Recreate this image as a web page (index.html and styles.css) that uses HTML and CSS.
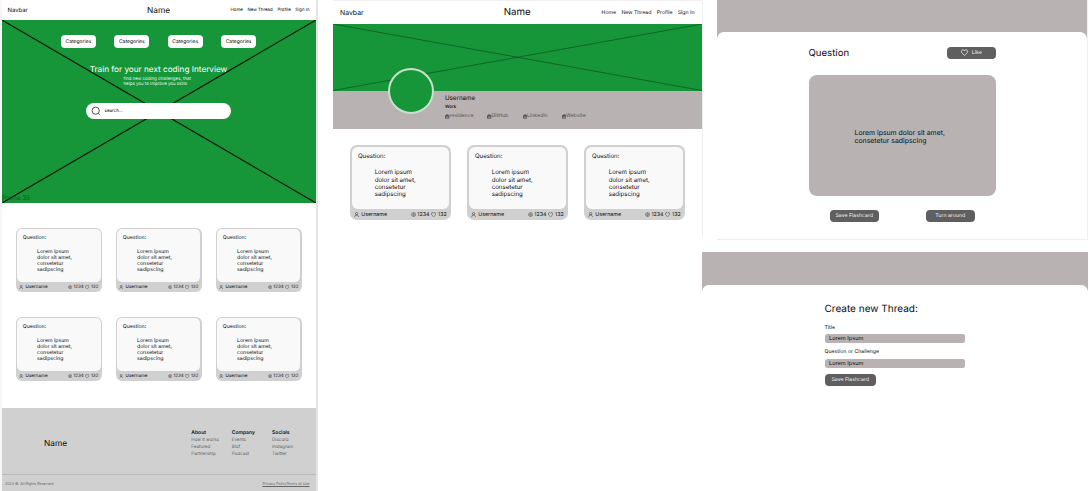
FILE: index.html
```html
<!DOCTYPE html>
<html lang="en">
<head>
<meta charset="utf-8">
<title>Wireframes</title>
<link rel="stylesheet" href="styles.css">
</head>
<body>
<svg class="defs" aria-hidden="true">
  <symbol id="user" viewBox="0 0 16 16"><circle cx="8" cy="5" r="3.6"/><path d="M2 15.5c0-4 2.5-6 6-6s6 2 6 6"/></symbol>
  <symbol id="eye" viewBox="0 0 16 16"><path d="M.8 8C3 3.4 5.5 2 8 2s5 1.400 7.200 6c-2.200 4.600-4.700 6-7.200 6S3 12.600.8 8z"/><circle cx="8" cy="8" r="2.600"/></symbol>
  <symbol id="heart" viewBox="0 0 16 16"><path d="M8 14.500C4 11.500 1 9 1 5.500 1 3.300 2.600 1.800 4.500 1.800c1.500 0 2.800.8 3.500 2.200.7-1.400 2-2.200 3.500-2.200 1.900 0 3.500 1.500 3.500 3.700 0 3.500-3 6-7 9z"/></symbol>
  <symbol id="case" viewBox="0 0 16 16"><path d="M5 5V2h6v3M1 5h14v9H1zM1 9h14"/></symbol>
</svg>
<main class="board">
  <section class="screen home">
    <nav class="nav"><span>Navbar</span><strong class="brand">Name</strong><div class="links"><a>Home</a><a>New Thread</a><a>Profile</a><a>Sign In</a></div></nav>
    <header class="hero">
      <svg class="cross" viewBox="0 0 314 183" preserveAspectRatio="none"><path d="M0 0L314 183M0 183L314 0"/></svg>
      <div class="cats"><span>Categories</span><span>Categories</span><span>Categories</span><span>Categories</span></div>
      <h1>Train for your next coding Interview</h1>
      <p class="lead">find new coding challenges, that<br>helps you to improve you skills</p>
      <div class="search"><svg viewBox="0 0 10 10"><circle cx="4.700" cy="4.700" r="3.600"/><path d="M7.300 7.300L8.600 8.600"/></svg><span>search...</span></div>
      <span class="frame">Frame 35</span>
    </header>
    <div class="cards">
      <article class="card"><div class="face"><h3>Question:</h3><p>Lorem ipsum<br>dolor sit amet,<br>consetetur<br>sadipscing</p></div><footer><svg><use href="#user"/></svg><b>Username</b><svg class="eye"><use href="#eye"/></svg><i>1234</i><svg><use href="#heart"/></svg><i class="likes">132</i></footer></article>
      <article class="card"><div class="face"><h3>Question:</h3><p>Lorem ipsum<br>dolor sit amet,<br>consetetur<br>sadipscing</p></div><footer><svg><use href="#user"/></svg><b>Username</b><svg class="eye"><use href="#eye"/></svg><i>1234</i><svg><use href="#heart"/></svg><i class="likes">132</i></footer></article>
      <article class="card"><div class="face"><h3>Question:</h3><p>Lorem ipsum<br>dolor sit amet,<br>consetetur<br>sadipscing</p></div><footer><svg><use href="#user"/></svg><b>Username</b><svg class="eye"><use href="#eye"/></svg><i>1234</i><svg><use href="#heart"/></svg><i class="likes">132</i></footer></article>
      <article class="card"><div class="face"><h3>Question:</h3><p>Lorem ipsum<br>dolor sit amet,<br>consetetur<br>sadipscing</p></div><footer><svg><use href="#user"/></svg><b>Username</b><svg class="eye"><use href="#eye"/></svg><i>1234</i><svg><use href="#heart"/></svg><i class="likes">132</i></footer></article>
      <article class="card"><div class="face"><h3>Question:</h3><p>Lorem ipsum<br>dolor sit amet,<br>consetetur<br>sadipscing</p></div><footer><svg><use href="#user"/></svg><b>Username</b><svg class="eye"><use href="#eye"/></svg><i>1234</i><svg><use href="#heart"/></svg><i class="likes">132</i></footer></article>
      <article class="card"><div class="face"><h3>Question:</h3><p>Lorem ipsum<br>dolor sit amet,<br>consetetur<br>sadipscing</p></div><footer><svg><use href="#user"/></svg><b>Username</b><svg class="eye"><use href="#eye"/></svg><i>1234</i><svg><use href="#heart"/></svg><i class="likes">132</i></footer></article>
    </div>
    <footer class="foot">
      <div class="foot-top">
        <strong class="brand">Name</strong>
        <div class="cols">
          <div><h4>About</h4><a>How it works</a><a>Featured</a><a>Partnership</a></div>
          <div><h4>Company</h4><a>Events</a><a>Blof</a><a>Podcast</a></div>
          <div><h4>Socials</h4><a>Discord</a><a>Instagram</a><a>Twitter</a></div>
        </div>
      </div>
      <div class="legal"><span>2023 ©. All Rights Reserved</span><u>Privacy PolicyTerms of Use</u></div>
    </footer>
  </section>

  <section class="screen profile">
    <nav class="nav"><span>Navbar</span><strong class="brand">Name</strong><div class="links"><a>Home</a><a>New Thread</a><a>Profile</a><a>Sign In</a></div></nav>
    <header class="cover"><svg class="cross" viewBox="0 0 369 67" preserveAspectRatio="none"><path d="M0 0L369 67M0 67L369 0"/></svg></header>
    <div class="bio">
      <div class="avatar"></div>
      <h2>Username</h2>
      <p>Work</p>
      <div class="socials"><a><svg><use href="#case"/></svg>residence</a><a><svg><use href="#case"/></svg>GitHub</a><a><svg><use href="#case"/></svg>LinkedIn</a><a><svg><use href="#case"/></svg>Website</a></div>
    </div>
    <div class="cards">
      <article class="card"><div class="face"><h3>Question:</h3><p>Lorem ipsum<br>dolor sit amet,<br>consetetur<br>sadipscing</p></div><footer><svg><use href="#user"/></svg><b>Username</b><svg class="eye"><use href="#eye"/></svg><i>1234</i><svg><use href="#heart"/></svg><i class="likes">132</i></footer></article>
      <article class="card"><div class="face"><h3>Question:</h3><p>Lorem ipsum<br>dolor sit amet,<br>consetetur<br>sadipscing</p></div><footer><svg><use href="#user"/></svg><b>Username</b><svg class="eye"><use href="#eye"/></svg><i>1234</i><svg><use href="#heart"/></svg><i class="likes">132</i></footer></article>
      <article class="card"><div class="face"><h3>Question:</h3><p>Lorem ipsum<br>dolor sit amet,<br>consetetur<br>sadipscing</p></div><footer><svg><use href="#user"/></svg><b>Username</b><svg class="eye"><use href="#eye"/></svg><i>1234</i><svg><use href="#heart"/></svg><i class="likes">132</i></footer></article>
    </div>
  </section>

  <div class="side">
    <section class="question">
      <div class="panel">
        <div class="q-head"><h2>Question</h2><button class="btn"><svg><use href="#heart"/></svg>Like</button></div>
        <div class="flash"><p>Lorem ipsum dolor sit amet,<br>consetetur sadipscing</p></div>
        <div class="actions"><button class="btn">Save Flashcard</button><button class="btn">Turn around</button></div>
      </div>
    </section>
    <section class="create">
      <div class="panel">
        <h2>Create new Thread:</h2>
        <label>Title</label><div class="field">Lorem Ipsum</div>
        <label>Question or Challenge</label><div class="field">Lorem Ipsum</div>
        <button class="btn">Save Flashcard</button>
      </div>
    </section>
  </div>
</main>
</body>
</html>
```
FILE: styles.css
```css
* { box-sizing: border-box; margin: 0; padding: 0; }
body { width: 1089px; height: 491px; overflow: hidden; background: #fff; color: #0c0c0c; font-family: Inter, "Liberation Sans", sans-serif; font-weight: 400; text-rendering: geometricPrecision; }
.defs { display: block; width: 0; height: 0; }
svg { fill: none; stroke: currentColor; }
h1, h2, h3, strong { font-weight: 400; }
.board { display: flex; width: 1089px; height: 491px; overflow: hidden; }

.home { width: 318px; height: 491px; margin-right: 15px; border-left: 2px solid #f7f7f7; border-right: 2px solid #e4e4e4; flex: none; }
.nav { display: grid; grid-template-columns: 1fr auto 1fr; align-items: center; }
.links { display: flex; justify-content: flex-end; }
.home .nav { height: 20px; padding: 1px 6.500px 0 5.500px; font-size: 5.900px; }
.home .brand { font-size: 8.300px; }
.home .links { gap: 4.600px; font-size: 4.400px; }

.hero { position: relative; height: 183px; background: #179639; display: flex; flex-direction: column; align-items: center; padding: 14.500px 1px 0 0; }
.cross { position: absolute; inset: 0; width: 100%; height: 100%; stroke: #051c0b; stroke-width: 1.200; }
.hero > :not(.cross):not(.frame) { position: relative; }
.cats { display: flex; gap: 18.600px; height: 13.500px; }
.cats span { width: 34.800px; background: #fff; border-radius: 4px; font-size: 5px; line-height: 14.500px; text-align: center; }
.hero h1 { margin-top: 15px; height: 12px; line-height: 12px; font-size: 8.200px; color: #fff; white-space: nowrap; }
.lead { width: 70px; margin-top: 2px; font-size: 4.400px; line-height: 5.200px; color: #e2f2e6; white-space: nowrap; }
.search { width: 145px; height: 16px; margin-top: 15.600px; border-radius: 8px; background: #fff; display: flex; align-items: center; padding-left: 5px; gap: 3.500px; font-size: 4.500px; }
.search svg { width: 10px; height: 10px; stroke-width: .7; }
.frame { position: absolute; left: 0; bottom: 1px; font-size: 6.300px; line-height: 7px; color: #0b5a20; }

.cards { display: grid; grid-template-columns: repeat(3, 16.500em); }
.home .cards { font-size: 5.200px; padding: 25px 14px 0; column-gap: 14.200px; row-gap: 25px; height: 205px; align-content: start; }
.card { height: 12.300em; background: #d0d0d0; border-radius: 1.150em; padding: .25em; }
.face { height: 10.200em; background: #f9f9f9; border-radius: .95em; padding: 1.130em 1.050em 0; }
.card h3 { font-size: 1em; line-height: 1.400em; }
.card p { font-size: 1em; line-height: 1.190em; margin: 1.200em 0 0 2.750em; white-space: nowrap; }
.card footer { height: 1.800em; display: flex; align-items: center; padding: .15em .4em 0 .4em; }
.card footer svg { width: .85em; height: .85em; margin-top: -.15em; stroke-width: 1.300; flex: none; }
.card b, .card i { font: inherit; font-size: .87em; }
.card b { margin-left: .4em; }
.card .eye { margin-left: auto; }
.card i { margin: 0 .35em 0 .3em; }
.card .likes { margin-right: 0; }

.foot { height: 83px; background: #d0d0d0; }
.foot-top { height: 67px; display: flex; justify-content: space-between; padding: 20.600px 3.500px 0 42px; border-bottom: 1px solid #bababa; }
.foot .brand { line-height: 30px; }
.cols { display: grid; grid-template-columns: repeat(3, 40.400px); }
.cols h4 { font-size: 5px; line-height: 8px; font-weight: 600; }
.cols a { display: block; font-size: 4.500px; line-height: 7.400px; color: #666; white-space: nowrap; }
.legal { height: 16px; display: flex; justify-content: space-between; align-items: center; padding: 1px 6.500px 0 3px; font-size: 3.650px; color: #666; }

.profile { width: 370px; height: 236px; flex: none; border-top: 1px solid #f1f1f1; border-right: 1px solid #eee; }
.profile .nav { height: 23px; padding: .5px 7.500px 0 7px; font-size: 6.900px; }
.profile .brand { font-size: 9.700px; }
.profile .links { gap: 5.300px; font-size: 5.200px; }
.cover { position: relative; height: 66.500px; background: #179639; }
.cover .cross { stroke: #0b5120; stroke-width: .7; }
.bio { position: relative; height: 38px; background: #b8b2b2; padding: 3.600px 0 0 112px; }
.avatar { position: absolute; left: 54.500px; top: -23px; width: 46px; height: 46px; border-radius: 50%; border: 2px solid #c8e0cc; background: #179639; }
.bio h2 { font-size: 6.200px; line-height: 9px; }
.bio p { font-size: 4.500px; line-height: 9px; font-weight: 500; }
.socials { display: grid; grid-template-columns: 42px 35.500px 39px auto; font-size: 5.200px; line-height: 9px; color: #555; }
.socials a { display: flex; align-items: center; }
.socials svg { width: 4.500px; height: 5px; stroke: #222; stroke-width: 2; }
.profile .cards { font-size: 6.100px; padding: 16.500px 17px 0; column-gap: 16.400px; }

.side { width: 386px; margin-left: -1px; flex: none; }
.question { width: 371px; height: 239.500px; margin-left: 15px; padding-top: 31.500px; background: linear-gradient(#b8b2b2 40px, #fff 40px); border-right: 1px solid #f0f0f0; border-bottom: 1px solid #eee; }
.panel { background: #fff; border-radius: 7px 7px 0 0; }
.question .panel { height: 206px; padding: 15px 91px 0 91.500px; }
.q-head { height: 12px; display: flex; justify-content: space-between; align-items: center; }
.q-head h2 { font-size: 9.600px; padding-top: 1.200px; }
.btn { width: 49.500px; height: 12px; border: 0; border-radius: 4px; background: #5f5f5f; color: #f4f4f4; font-family: inherit; font-size: 5.200px; line-height: 12px; display: flex; justify-content: center; align-items: center; white-space: nowrap; text-rendering: inherit; }
.btn svg { width: 7px; height: 7px; margin-right: 4px; stroke-width: 1.800; }
.flash { height: 121px; margin-top: 16.500px; border-radius: 8px; background: #b8b2b2; padding: 54px 0 0 46px; font-size: 6.900px; line-height: 8.200px; white-space: nowrap; }
.actions { display: flex; justify-content: space-between; padding: 13.500px 21px 0; }
.create { width: 386px; height: 239.500px; margin-top: 12px; padding-top: 33px; background: linear-gradient(#b8b2b2 41px, #fff 41px); }
.create .panel { height: 206px; padding: 17px 0 0 122.500px; }
.create h2 { font-size: 10px; line-height: 14px; }
.create label { display: block; height: 9px; margin-top: 7.500px; margin-bottom: 2px; font-size: 5.200px; line-height: 10.200px; }
.field { width: 140.500px; height: 9px; border-radius: 2.500px; background: #b8b2b2; padding-left: 4.500px; font-size: 5.600px; line-height: 10.200px; }
.field + label { margin-top: 3.500px; margin-bottom: 3.500px; }
.create .btn { width: 51.500px; margin-top: 6px; }
```
